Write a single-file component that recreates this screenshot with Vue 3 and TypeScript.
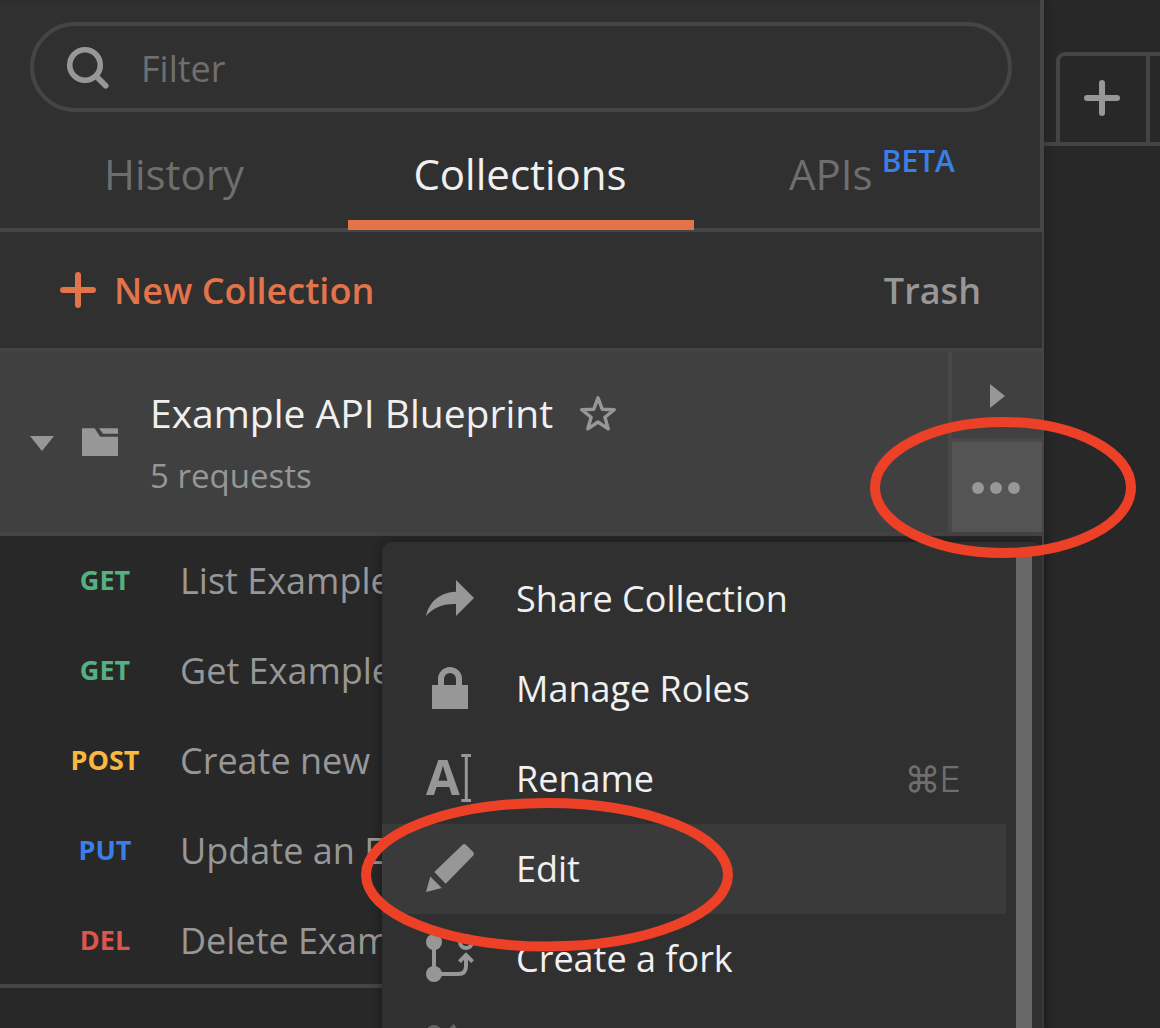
<script setup lang="ts">
import { ref } from 'vue'

interface RequestItem {
  method: string
  name: string
}

interface MenuItem {
  id: string
  label: string
  shortcut?: string
}

const filter = ref('')
const hovered = ref('edit')

const requests: RequestItem[] = [
  { method: 'GET', name: 'List Examples' },
  { method: 'GET', name: 'Get Example' },
  { method: 'POST', name: 'Create new Example' },
  { method: 'PUT', name: 'Update an Example' },
  { method: 'DEL', name: 'Delete Example' },
]

const menu: MenuItem[] = [
  { id: 'share', label: 'Share Collection' },
  { id: 'roles', label: 'Manage Roles' },
  { id: 'rename', label: 'Rename', shortcut: 'E' },
  { id: 'edit', label: 'Edit' },
  { id: 'fork', label: 'Create a fork' },
  { id: 'merge', label: '' },
]
</script>

<template>
  <div class="app">
    <aside class="sidebar">
      <header class="head">
        <label class="filter">
          <svg class="search" width="44" height="44" viewBox="0 0 44 44" fill="none" stroke="#979797">
            <circle cx="20" cy="20" r="15.3" stroke-width="5.6" />
            <path d="M31.5 31.5 40.7 40.7" stroke-width="5.8" stroke-linecap="round" />
          </svg>
          <input v-model="filter" type="text" placeholder="Filter" />
        </label>
        <nav class="tabs">
          <button class="tab first">History</button>
          <button class="tab active">Collections</button>
          <button class="tab last">APIs<span class="beta">BETA</span></button>
        </nav>
      </header>

      <div class="body">
        <div class="toolbar">
          <button class="new">
            <svg width="36" height="36" viewBox="0 0 36 36" stroke="#e2734a" stroke-width="6" stroke-linecap="round">
              <path d="M3 18H33M18 3V33" />
            </svg>
            New Collection
          </button>
          <button class="trash">Trash</button>
        </div>

        <section class="collection">
          <div class="info">
            <svg class="caret" width="24" height="15" viewBox="0 0 24 15"><path d="M0 0H24L12 15Z" fill="#979797" /></svg>
            <svg class="folder" width="36" height="28" viewBox="0 0 36 28" fill="#979797">
              <path d="M1 .3H12.6L18.2 8.8H36V27q0 1-1 1H1q-1 0-1-1V1.3Q0 .3 1 .3Z" />
              <path d="M17 .3H35q1 0 1 1V5.8H21Z" />
            </svg>
            <div class="titles">
              <div class="name">
                Example API Blueprint
                <svg class="star" width="36" height="36" viewBox="0 0 36 36" fill="none" stroke="#979797" stroke-width="3.4" stroke-linejoin="round">
                  <path d="M18 1.8 22.2 13.2 34.2 13.7 24.9 21.3 28.2 32.8 18 26 7.8 32.8 11.1 21.3 1.8 13.7 13.8 13.2Z" />
                </svg>
              </div>
              <div class="count">5 requests</div>
            </div>
          </div>
          <div class="actions">
            <button class="open">
              <svg width="15" height="24" viewBox="0 0 15 24"><path d="M0 0 15 12 0 24Z" fill="#979797" /></svg>
            </button>
            <button class="more"><i></i><i></i><i></i></button>
          </div>
        </section>

        <ul class="requests">
          <li v-for="r in requests" :key="r.name">
            <span class="method" :class="r.method.toLowerCase()">{{ r.method }}</span>
            <span class="label">{{ r.name }}</span>
          </li>
        </ul>
      </div>
    </aside>

    <main class="main">
      <div class="strip">
        <button class="add">
          <svg width="36" height="36" viewBox="0 0 36 36" stroke="#979797" stroke-width="6" stroke-linecap="round">
            <path d="M3 18H33M18 3V33" />
          </svg>
        </button>
        <div class="rest"></div>
      </div>
    </main>

    <div class="menu">
      <ul>
        <li v-for="m in menu" :key="m.id" :class="{ on: hovered === m.id, dim: m.id === 'merge' }" @mouseenter="hovered = m.id">
          <svg class="icon" :class="m.id" width="48" height="48" viewBox="0 0 48 48" fill="#979797">
            <path v-if="m.id === 'share'" d="M30 5 48 23 30 41V29C16 28.6 7 33 0 41 3 27 14 17 30 16.7Z" />
            <template v-else-if="m.id === 'roles'">
              <path d="M6 20H42V44H6Z" />
              <path d="M15 21V14a9 9 0 0 1 18 0V21" fill="none" stroke="#979797" stroke-width="6" />
            </template>
            <template v-else-if="m.id === 'rename'">
              <text x="0" y="40.6" class="letter">A</text>
              <path d="M35.3 0H45V3H41.8V45H45V48H35.3V45H38.8V3H35.3Z" />
            </template>
            <path v-else-if="m.id === 'edit'" d="M0 48 4.3 32.4 15.8 44ZM8.3 28 36.6.8q1.7-1.5 3.4 0L47.3 8.2q1.4 1.5 0 3.2L19.7 39.8Z" />
            <template v-else-if="m.id === 'fork'">
              <circle cx="8" cy="8" r="8" />
              <circle cx="8" cy="40" r="8" />
              <g fill="none" stroke="#979797" stroke-width="4">
                <circle cx="40" cy="8" r="6" />
                <path d="M8 8V40H32Q40 40 40 32V21" />
                <path d="M33.4 27.6 40 21 46.6 27.6" />
              </g>
            </template>
            <g v-else fill="none" stroke="#979797" stroke-width="4">
              <circle cx="8" cy="8" r="6" />
              <path d="M29 .5 18 11.5" />
            </g>
          </svg>
          <span class="text">{{ m.label }}</span>
          <span v-if="m.shortcut" class="key"><span class="cmd">⌘</span>{{ m.shortcut }}</span>
        </li>
      </ul>
      <div class="scroll"></div>
    </div>

    <svg class="marks" width="1160" height="1028" viewBox="0 0 1160 1028" fill="none" stroke="#ec4127" stroke-width="10">
      <ellipse cx="1003" cy="487.5" rx="128" ry="65.5" />
      <ellipse cx="547" cy="874.7" rx="181" ry="71.8" />
    </svg>
  </div>
</template>

<style>
body {
  margin: 0;
  background: #282828;
}
</style>

<style scoped>
* {
  box-sizing: border-box;
}
.app {
  position: relative;
  display: flex;
  width: 1160px;
  height: 1028px;
  overflow: hidden;
  background: #282828;
  font-family: "Open Sans", sans-serif;
  font-size: 36px;
  color: #979797;
}
button {
  border: 0;
  padding: 0;
  margin: 0;
  background: none;
  font: inherit;
  color: inherit;
}
svg {
  display: block;
  flex: none;
}
ul {
  list-style: none;
  margin: 0;
  padding: 0;
}
.sidebar {
  width: 1044px;
  flex: none;
  display: flex;
  flex-direction: column;
  position: relative;
  box-shadow: 0 0 10px rgba(0, 0, 0, 0.3);
}
.head {
  height: 232px;
  flex: none;
  display: flex;
  flex-direction: column;
  background: linear-gradient(#2c2c2c, #303030 5px);
  border-right: 4px solid #454545;
  border-bottom: 4px solid #454545;
  padding-top: 22px;
}
.filter {
  display: flex;
  flex: none;
  align-items: center;
  width: 982px;
  height: 90px;
  margin-left: 30px;
  border: 4px solid #454545;
  border-radius: 45px;
  padding-left: 31px;
}
.search {
  margin-bottom: 1px;
}
.filter input {
  width: 700px;
  margin: 2px 0 0 32px;
  padding: 0;
  border: 0;
  outline: 0;
  background: none;
  font: inherit;
  color: #f0f0f0;
}
.filter input::placeholder {
  color: #6e6e6e;
  opacity: 1;
}
.tabs {
  height: 118px;
  flex: none;
  display: flex;
  font-size: 42px;
  color: #6e6e6e;
}
.tab {
  width: 346px;
  height: 118px;
  display: flex;
  justify-content: center;
  padding: 33px 2px 0 0;
  line-height: 58px;
}
.first {
  width: 348px;
  padding-right: 0;
}
.active {
  color: #f0f0f0;
  border-bottom: 10px solid #e2734a;
  position: relative;
}
.beta {
  margin: -13px 0 0 9px;
  font-size: 30px;
  font-weight: 600;
  color: #3a7ee8;
}
.last {
  padding-left: 12px;
}
.body {
  flex: 1;
  border-right: 2px solid #454545;
  background: #282828;
}
.toolbar {
  height: 116px;
  display: flex;
  align-items: center;
  justify-content: space-between;
  padding: 0 61px 0 60px;
  background: #303030;
  font-weight: 600;
}
.new {
  display: flex;
  align-items: center;
  gap: 18px;
  color: #e2734a;
}
.collection {
  display: flex;
  height: 188px;
  border-top: 4px solid #444;
  border-bottom: 4px solid #444;
  background: #404040;
}
.info {
  flex: 1;
  display: flex;
  padding-left: 30px;
}
.caret {
  margin-top: 84px;
}
.folder {
  margin: 76px 0 0 28px;
}
.titles {
  margin: 33px 0 0 32px;
}
.name {
  display: flex;
  align-items: center;
  height: 54px;
  font-size: 39px;
  color: #f0f0f0;
}
.star {
  margin: 3px 0 0 27px;
}
.count {
  font-size: 33px;
  line-height: 44px;
  margin-top: 15px;
}
.actions {
  width: 94px;
  border-left: 4px solid #484848;
  display: flex;
  flex-direction: column;
}
.open {
  height: 90px;
  border-bottom: 4px solid #484848;
  display: flex;
  align-items: center;
  padding: 2px 0 0 38px;
}
.more {
  flex: 1;
  display: flex;
  align-items: center;
  justify-content: center;
  gap: 6px;
  padding-right: 2px;
  padding-top: 2px;
  background: #545454;
}
.more i {
  width: 12px;
  height: 12px;
  border-radius: 50%;
  background: #979797;
}
.requests {
  height: 452px;
  border-bottom: 4px solid #454545;
}
.requests li {
  display: flex;
  align-items: center;
  height: 90px;
  padding-bottom: 2px;
  white-space: nowrap;
}
.method {
  width: 90px;
  margin-left: 60px;
  padding-bottom: 2px;
  text-align: center;
  font-size: 27px;
  font-weight: 700;
}
.label {
  margin-left: 30px;
}
.get {
  color: #55b082;
}
.post {
  color: #fab83f;
}
.put {
  color: #3a7ee8;
}
.del {
  color: #dc5550;
}
.main {
  flex: 1;
  padding-top: 52px;
}
.strip {
  display: flex;
  height: 94px;
  padding-left: 12px;
  border-bottom: 4px solid #454545;
}
.add {
  width: 94px;
  border: 4px solid #454545;
  border-bottom: 0;
  border-top-left-radius: 9px;
  display: flex;
  align-items: center;
  justify-content: center;
  padding: 0 2px 2px 0;
}
.rest {
  flex: 1;
  border-top: 4px solid #454545;
}
.menu {
  position: absolute;
  left: 382px;
  top: 542px;
  width: 660px;
  height: 600px;
  display: flex;
  padding-top: 12px;
  background: #303030;
  border-radius: 10px;
  box-shadow: 0 0 12px rgba(0, 0, 0, 0.4);
}
.menu ul {
  width: 624px;
}
.menu li {
  display: flex;
  align-items: center;
  height: 90px;
  padding-left: 44px;
  color: #f0f0f0;
}
.menu .on {
  background: #3a3a3a;
}
.icon {
  overflow: visible;
}
.rename,
.edit,
.fork {
  margin-bottom: 2px;
}
.dim .icon {
  opacity: 0.5;
}
.letter {
  font: 700 49px "Open Sans", sans-serif;
}
.text {
  flex: 1;
  margin-left: 42px;
  padding-bottom: 2px;
}
.key {
  display: flex;
  align-items: center;
  margin-right: 45px;
  font-family: Inter, sans-serif;
  font-weight: 300;
  color: #6e6e6e;
}
.cmd {
  margin-right: -1px;
  font-weight: 400;
}
.scroll {
  width: 16px;
  margin-left: 10px;
  background: #686868;
}
.marks {
  position: absolute;
  left: 0;
  top: 0;
  pointer-events: none;
}
</style>
